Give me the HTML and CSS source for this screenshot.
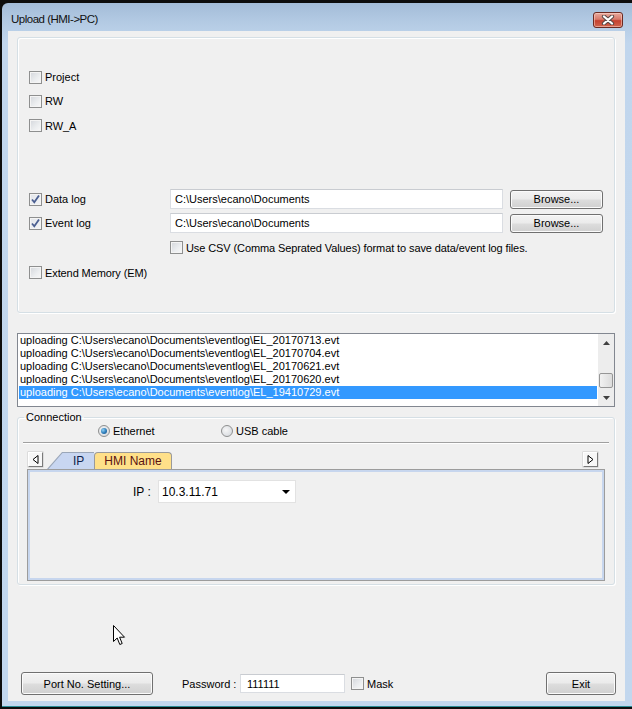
FILE: index.html
```html
<!DOCTYPE html>
<html>
<head>
<meta charset="utf-8">
<title>Upload (HMI-&gt;PC)</title>
<link rel="stylesheet" href="styles.css">
</head>
<body>
<div class="window">
  <div class="titlebar">
    <span class="title">Upload (HMI-&gt;PC)</span>
    <span class="close">
      <svg width="14" height="10" viewBox="0 0 14 10"><path d="M3 1.5 L11 8.5 M11 1.5 L3 8.5" stroke="#5a4a48" stroke-width="4.2" stroke-linecap="round"/><path d="M3 1.5 L11 8.5 M11 1.5 L3 8.5" stroke="#ffffff" stroke-width="2.2" stroke-linecap="round"/></svg>
    </span>
  </div>
  <div class="client">
    <div class="group options">
      <div class="opt-row"><span class="cb"></span><span class="lbl">Project</span></div>
      <div class="opt-row"><span class="cb"></span><span class="lbl">RW</span></div>
      <div class="opt-row tall"><span class="cb"></span><span class="lbl">RW_A</span></div>
      <div class="opt-gap"></div>
      <div class="opt-row">
        <div class="lblcol"><span class="cb checked"><svg width="11" height="11" viewBox="0 0 11 11"><path d="M2 5.5 L4.3 8.3 L9 1.5" fill="none" stroke="#4b5f91" stroke-width="1.8"/></svg></span><span class="lbl">Data log</span></div>
        <div class="textbox path">C:\Users\ecano\Documents</div>
        <button class="btn browse">Browse...</button>
      </div>
      <div class="opt-row">
        <div class="lblcol"><span class="cb checked"><svg width="11" height="11" viewBox="0 0 11 11"><path d="M2 5.5 L4.3 8.3 L9 1.5" fill="none" stroke="#4b5f91" stroke-width="1.8"/></svg></span><span class="lbl">Event log</span></div>
        <div class="textbox path">C:\Users\ecano\Documents</div>
        <button class="btn browse">Browse...</button>
      </div>
      <div class="opt-row tall csv"><span class="cb"></span><span class="lbl">Use CSV (Comma Seprated Values) format to save data/event log files.</span></div>
      <div class="opt-row tall"><span class="cb"></span><span class="lbl">Extend Memory (EM)</span></div>
    </div>

    <div class="log">
      <div class="log-items">
        <div class="log-item">uploading C:\Users\ecano\Documents\eventlog\EL_20170713.evt</div>
        <div class="log-item">uploading C:\Users\ecano\Documents\eventlog\EL_20170704.evt</div>
        <div class="log-item">uploading C:\Users\ecano\Documents\eventlog\EL_20170621.evt</div>
        <div class="log-item">uploading C:\Users\ecano\Documents\eventlog\EL_20170620.evt</div>
        <div class="log-item selected">uploading C:\Users\ecano\Documents\eventlog\EL_19410729.evt</div>
      </div>
      <div class="scrollbar">
        <div class="sb-btn"><svg width="7" height="4" viewBox="0 0 7 4"><path d="M0 4 L3.5 0 L7 4Z" fill="#404040"/></svg></div>
        <div class="sb-track"><div class="sb-thumb"></div></div>
        <div class="sb-btn"><svg width="7" height="4" viewBox="0 0 7 4"><path d="M0 0 L3.5 4 L7 0Z" fill="#404040"/></svg></div>
      </div>
    </div>

    <fieldset class="connection">
      <legend>Connection</legend>
      <div class="radio-row">
        <label class="radio-item eth"><span class="radio on"></span>Ethernet</label>
        <label class="radio-item"><span class="radio"></span>USB cable</label>
      </div>
      <div class="separator"></div>
      <div class="tab-row">
        <span class="tab-arrow"><svg width="7" height="9" viewBox="0 0 7 9"><path d="M6 0.5 L1 4.5 L6 8.5Z" fill="#fff" stroke="#000" stroke-width="1"/></svg></span>
        <div class="tab-ip"><div class="tab-ip-inner">IP</div></div>
        <div class="tab-hmi">HMI Name</div>
        <span class="tab-arrow right"><svg width="7" height="9" viewBox="0 0 7 9"><path d="M1 0.5 L6 4.5 L1 8.5Z" fill="#fff" stroke="#000" stroke-width="1"/></svg></span>
      </div>
      <div class="tab-panel">
        <div class="ip-row">
          <span class="ip-label">IP :</span>
          <div class="combo"><span>10.3.11.71</span><svg width="8" height="4" viewBox="0 0 8 4"><path d="M0 0 L8 0 L4 4Z" fill="#000"/></svg></div>
        </div>
      </div>
    </fieldset>

    <div class="footer">
      <button class="btn port">Port No. Setting...</button>
      <span class="pw-label">Password :</span>
      <div class="textbox pw">111111</div>
      <span class="cb mask-cb"></span><span class="lbl">Mask</span>
      <button class="btn exit">Exit</button>
    </div>
  </div>
  <svg class="cursor" width="13" height="21" viewBox="0 0 13 21"><path d="M0.5 0.5 L0.5 16.5 L4.2 13 L6.8 19.5 L9.2 18.5 L6.6 12.2 L11.5 12.2 Z" fill="#fff" stroke="#000" stroke-width="1"/></svg>
</div>
</body>
</html>
```

FILE: styles.css
```css
* { box-sizing: border-box; }

html, body {
  margin: 0;
  padding: 0;
}

body {
  width: 632px;
  height: 709px;
  overflow: hidden;
  background: #0d0d0d;
  font-family: "Liberation Sans", Arial, sans-serif;
  font-size: 11px;
  color: #000;
}

.window {
  position: relative;
  margin: 3px 0 0 2px;
  height: 704px;
  padding: 0 7px 5px 6px;
  background: linear-gradient(180deg, #a3bcd8 0px, #b4cbe4 20px, #c1d6ed 40px, #c2d7ee 100%);
  border-top-left-radius: 6px;
  border-bottom: 1px solid #2b8c96;
  display: flex;
  flex-direction: column;
}

.titlebar {
  height: 28px;
  display: flex;
  justify-content: space-between;
  align-items: flex-start;
}

.title {
  margin: 10px 0 0 3px;
  font-family: "Liberation Sans", Arial, sans-serif;
  font-size: 11.5px;
  letter-spacing: -0.5px;
  color: #111;
}

.close {
  margin: 9px 2px 0 0;
  width: 30px;
  height: 16px;
  border: 1px solid #6b2a22;
  border-radius: 3px;
  background: linear-gradient(180deg, #e8aa9e 0%, #d7796a 45%, #c5412f 55%, #d0654e 100%);
  box-shadow: inset 0 0 0 1px rgba(255,220,210,0.5);
  display: flex;
  align-items: center;
  justify-content: center;
}

.client {
  flex: 1;
  background: #f0f0f0;
  display: flex;
  flex-direction: column;
}

/* group box */
.group {
  border: 1px solid #d5dfe5;
  border-radius: 3px;
  box-shadow: inset 1px 1px 0 #fff, 1px 1px 0 #fff;
}

.options {
  margin: 6px 10px 0 9px;
  height: 276px;
  padding: 27px 10px 0 11px;
}

.opt-row {
  height: 24px;
  display: flex;
  align-items: center;
}

.opt-row.tall { height: 25px; }

.opt-gap { height: 49px; }

.lblcol {
  width: 141px;
  display: flex;
  align-items: center;
}

.csv { padding-left: 141px; }

.cb {
  width: 13px;
  height: 13px;
  flex: none;
  border: 1px solid #8e8f8f;
  background: linear-gradient(135deg, #d3d6db 0%, #eceef0 60%, #f8f8f8 100%);
  box-shadow: inset 0 0 0 1px #f4f4f4;
  display: flex;
  align-items: center;
  justify-content: center;
}

.cb.checked {
  background: linear-gradient(135deg, #e2e5ea 0%, #f3f4f6 100%);
}

.lbl { margin-left: 3px; white-space: nowrap; }

.csv .lbl, .options .opt-row.tall .lbl { letter-spacing: -0.1px; }

.textbox {
  background: #fff;
  border: 1px solid #dadde2;
  border-top-color: #c9ccd1;
  display: flex;
  align-items: center;
  white-space: nowrap;
}

.path {
  width: 333px;
  height: 20px;
  padding-left: 4px;
}

.btn {
  font-family: "Liberation Sans", Arial, sans-serif;
  font-size: 11px;
  color: #000;
  border: 1px solid #707070;
  border-radius: 3px;
  background: linear-gradient(180deg, #f3f3f3 0%, #ebebeb 48%, #dddddd 52%, #d0d0d0 100%);
  box-shadow: inset 0 0 0 1px #fbfbfb;
  padding: 0;
  margin: 0;
}

.browse {
  margin-left: 7px;
  width: 93px;
  height: 19px;
}

/* log */
.log {
  margin: 20px 10px 0 9px;
  height: 74px;
  border: 1px solid #828790;
  background: #fff;
  display: flex;
}

.log-items {
  flex: 1;
  padding: 0 1px 0 1px;
}

.log-item {
  height: 13px;
  line-height: 13px;
  padding-left: 1px;
  white-space: nowrap;
  color: #000;
}

.log-item.selected {
  background: #3399ff;
  color: #fff;
}

.scrollbar {
  width: 16px;
  background: #ededed;
  display: flex;
  flex-direction: column;
}

.sb-btn {
  height: 17px;
  display: flex;
  align-items: center;
  justify-content: center;
}

.sb-track {
  flex: 1;
  display: flex;
  flex-direction: column;
  justify-content: flex-end;
  padding: 0 1px 1px 1px;
}

.sb-thumb {
  height: 15px;
  border: 1px solid #969696;
  border-radius: 2px;
  background: linear-gradient(90deg, #f2f2f2, #dcdcdc);
}

/* connection */
.connection {
  margin: 4px 10px 0 9px;
  padding: 0 9px 3px 9px;
  border: 1px solid #d5dfe5;
  border-radius: 3px;
  box-shadow: inset 1px 1px 0 #fff, 1px 1px 0 #fff;
  min-width: 0;
}

.connection legend {
  margin-left: -3px;
  padding: 0 2px;
  height: 13px;
  line-height: 13px;
  color: #000;
}

.radio-row {
  height: 14px;
  display: flex;
  align-items: center;
  padding-left: 71px;
}

.radio-item {
  display: flex;
  align-items: center;
}

.radio-item.eth { width: 123px; }

.radio {
  width: 12px;
  height: 12px;
  border-radius: 50%;
  border: 1px solid #8e8f8f;
  background: radial-gradient(circle at 40% 40%, #f6f6f6 0%, #dcdfe3 70%);
  margin-right: 3px;
  position: relative;
}

.radio.on::after {
  content: "";
  position: absolute;
  left: 2px;
  top: 2px;
  width: 6px;
  height: 6px;
  border-radius: 50%;
  background: radial-gradient(circle at 35% 35%, #8fd0f4 0%, #2a7ab8 55%, #1a4f80 100%);
}

.separator {
  margin: 4px -4px 0 -4px;
  height: 2px;
  border-top: 1px solid #a0a0a0;
  border-bottom: 1px solid #fff;
}

.tab-row {
  margin-top: 7px;
  height: 18px;
  display: flex;
  align-items: flex-end;
}

.tab-arrow {
  width: 15px;
  height: 15px;
  margin: 0 0 2px 1px;
  align-self: flex-start;
  margin-top: 1px;
  background: #f7f7f7;
  border: 1px solid;
  border-color: #fff #7a7a7a #7a7a7a #fff;
  box-shadow: 0 0 0 0.5px #c8c8c8;
  display: flex;
  align-items: center;
  justify-content: center;
}

.tab-arrow.right {
  margin-left: auto;
  margin-right: 7px;
}

.tab-ip {
  margin-left: 4px;
  width: 47px;
  height: 17px;
  background: #9aa6b8;
  clip-path: polygon(0 100%, 15px 0, 100% 0, 100% 100%);
  padding: 1px 0 0 0;
}

.tab-ip-inner {
  height: 16px;
  background: #c8d6f1;
  clip-path: polygon(1.5px 100%, 15.5px 0, 100% 0, 100% 100%);
  padding-left: 26px;
  line-height: 16px;
  color: #0f1f4a;
  font-size: 12px;
}

.tab-hmi {
  width: 78px;
  height: 17px;
  background: #ffe089;
  border: 1px solid #9a9a9a;
  border-bottom: none;
  border-radius: 4px 4px 0 0;
  text-align: center;
  line-height: 16px;
  color: #5a1212;
  font-size: 12px;
}

.tab-panel {
  height: 112px;
  border: 1px solid #9c9c9c;
  box-shadow: inset 0 0 0 2px #c7d6ee;
  background: #f0f0f0;
  padding: 10px 0 0 105px;
}

.ip-row {
  display: flex;
  align-items: center;
  height: 23px;
}

.ip-label {
  width: 25px;
  font-size: 12px;
}

.combo {
  width: 138px;
  height: 23px;
  background: #fff;
  border: 1px solid #e2e2e2;
  display: flex;
  align-items: center;
  justify-content: space-between;
  padding: 0 5px 0 3px;
  font-size: 12px;
}

/* footer */
.footer {
  margin-top: auto;
  display: flex;
  align-items: center;
  padding: 0 9px 6px 13px;
  height: 29px;
}

.port {
  width: 132px;
  height: 23px;
}

.pw-label {
  margin-left: 29px;
  width: 58px;
}

.pw {
  width: 105px;
  height: 19px;
  padding-left: 6px;
}

.mask-cb { margin-left: 6px; }

.exit {
  margin-left: auto;
  width: 70px;
  height: 23px;
}

.cursor {
  position: absolute;
  left: 111px;
  top: 622px;
}
```
